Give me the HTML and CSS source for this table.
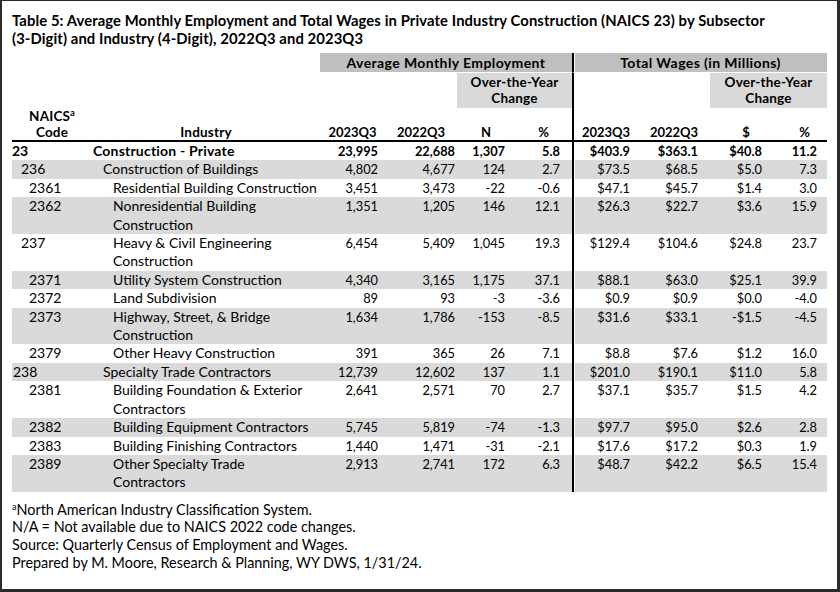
FILE: index.html
```html
<!DOCTYPE html>
<html lang="en">
<head>
<meta charset="utf-8">
<title>Table 5</title>
<link rel="stylesheet" href="styles.css">
</head>
<body>
<div class="page">
  <h1 class="title">Table 5: Average Monthly Employment and Total Wages in Private Industry Construction (NAICS 23) by Subsector<br>(3-Digit) and Industry (4-Digit), 2022Q3 and 2023Q3</h1>
  <table class="data">
    <colgroup>
      <col class="c-code"><col class="c-ind"><col class="c-e23"><col class="c-e22"><col class="c-n"><col class="c-ep"><col class="c-w23"><col class="c-w22"><col class="c-wd"><col class="c-wp">
    </colgroup>
    <thead>
      <tr class="hr1">
        <td colspan="2"></td>
        <th colspan="4" class="band-dark">Average Monthly Employment</th>
        <th colspan="4" class="band-dark wstart">Total Wages (in Millions)</th>
      </tr>
      <tr class="hr2">
        <td colspan="2"></td>
        <td colspan="2"></td>
        <th colspan="2" class="band-light">Over-the-Year<br>Change</th>
        <td colspan="2" class="wstart"></td>
        <th colspan="2" class="band-light">Over-the-Year<br>Change</th>
      </tr>
      <tr class="hr3">
        <th class="lbl">NAICS<sup>a</sup><br>Code</th>
        <th class="lbl">Industry</th>
        <th>2023Q3</th>
        <th>2022Q3</th>
        <th>N</th>
        <th>%</th>
        <th class="wstart">2023Q3</th>
        <th>2022Q3</th>
        <th>$</th>
        <th>%</th>
      </tr>
    </thead>
    <tbody>
      <tr class="total"><td class="code l0">23</td><td class="ind l0">Construction - Private</td><td>23,995</td><td>22,688</td><td>1,307</td><td>5.8</td><td class="wstart">$403.9</td><td>$363.1</td><td>$40.8</td><td>11.2</td></tr>
      <tr class="alt"><td class="code l1">236</td><td class="ind l1">Construction of Buildings</td><td>4,802</td><td>4,677</td><td>124</td><td>2.7</td><td class="wstart">$73.5</td><td>$68.5</td><td>$5.0</td><td>7.3</td></tr>
      <tr><td class="code l2">2361</td><td class="ind l2">Residential Building Construction</td><td>3,451</td><td>3,473</td><td>-22</td><td>-0.6</td><td class="wstart">$47.1</td><td>$45.7</td><td>$1.4</td><td>3.0</td></tr>
      <tr class="alt"><td class="code l2">2362</td><td class="ind l2">Nonresidential Building<br>Construction</td><td>1,351</td><td>1,205</td><td>146</td><td>12.1</td><td class="wstart">$26.3</td><td>$22.7</td><td>$3.6</td><td>15.9</td></tr>
      <tr><td class="code l1">237</td><td class="ind l2">Heavy &amp; Civil Engineering<br>Construction</td><td>6,454</td><td>5,409</td><td>1,045</td><td>19.3</td><td class="wstart">$129.4</td><td>$104.6</td><td>$24.8</td><td>23.7</td></tr>
      <tr class="alt"><td class="code l2">2371</td><td class="ind l2">Utility System Construction</td><td>4,340</td><td>3,165</td><td>1,175</td><td>37.1</td><td class="wstart">$88.1</td><td>$63.0</td><td>$25.1</td><td>39.9</td></tr>
      <tr><td class="code l2">2372</td><td class="ind l2">Land Subdivision</td><td>89</td><td>93</td><td>-3</td><td>-3.6</td><td class="wstart">$0.9</td><td>$0.9</td><td>$0.0</td><td>-4.0</td></tr>
      <tr class="alt"><td class="code l2">2373</td><td class="ind l2">Highway, Street, &amp; Bridge<br>Construction</td><td>1,634</td><td>1,786</td><td>-153</td><td>-8.5</td><td class="wstart">$31.6</td><td>$33.1</td><td>-$1.5</td><td>-4.5</td></tr>
      <tr><td class="code l2">2379</td><td class="ind l2">Other Heavy Construction</td><td>391</td><td>365</td><td>26</td><td>7.1</td><td class="wstart">$8.8</td><td>$7.6</td><td>$1.2</td><td>16.0</td></tr>
      <tr class="alt"><td class="code l1s">238</td><td class="ind l1">Specialty Trade Contractors</td><td>12,739</td><td>12,602</td><td>137</td><td>1.1</td><td class="wstart">$201.0</td><td>$190.1</td><td>$11.0</td><td>5.8</td></tr>
      <tr><td class="code l2">2381</td><td class="ind l2">Building Foundation &amp; Exterior<br>Contractors</td><td>2,641</td><td>2,571</td><td>70</td><td>2.7</td><td class="wstart">$37.1</td><td>$35.7</td><td>$1.5</td><td>4.2</td></tr>
      <tr class="alt"><td class="code l2">2382</td><td class="ind l2">Building Equipment Contractors</td><td>5,745</td><td>5,819</td><td>-74</td><td>-1.3</td><td class="wstart">$97.7</td><td>$95.0</td><td>$2.6</td><td>2.8</td></tr>
      <tr><td class="code l2">2383</td><td class="ind l2">Building Finishing Contractors</td><td>1,440</td><td>1,471</td><td>-31</td><td>-2.1</td><td class="wstart">$17.6</td><td>$17.2</td><td>$0.3</td><td>1.9</td></tr>
      <tr class="alt"><td class="code l2">2389</td><td class="ind l2">Other Specialty Trade<br>Contractors</td><td>2,913</td><td>2,741</td><td>172</td><td>6.3</td><td class="wstart">$48.7</td><td>$42.2</td><td>$6.5</td><td>15.4</td></tr>
    </tbody>
  </table>
  <div class="notes">
    <p><sup>a</sup>North American Industry Classification System.</p>
    <p>N/A = Not available due to NAICS 2022 code changes.</p>
    <p>Source: Quarterly Census of Employment and Wages.</p>
    <p>Prepared by M. Moore, Research &amp; Planning, WY DWS, 1/31/24.</p>
  </div>
</div>
</body>
</html>
```

FILE: styles.css
```css
body {
  margin: 0;
  background: #fff;
}

.page {
  width: 840px;
  height: 592px;
  box-sizing: border-box;
  border-style: solid;
  border-color: #2a2a2a;
  border-width: 1px 3px 3px 2px;
  padding: 11px 10px 0 10px;
  font-family: Lato, "Liberation Sans", sans-serif;
  color: #000;
  background: #fff;
  overflow: hidden;
}

.title {
  margin: 0;
  font-size: 14.8px;
  line-height: 17.8px;
  letter-spacing: 0.1px;
  font-weight: 700;
  white-space: nowrap;
}

.data {
  margin-top: 5px;
  width: 815px;
  table-layout: fixed;
  border-collapse: separate;
  border-spacing: 0;
  font-size: 12.8px;
  font-variant-numeric: tabular-nums lining-nums;
  white-space: nowrap;
}

.data th,
.data td {
  padding: 0;
}

.c-code { width: 80px; }
.c-ind { width: 228px; }
.c-e23 { width: 65px; }
.c-e22 { width: 72px; }
.c-n { width: 58px; }
.c-ep { width: 57px; }
.c-w23 { width: 66px; }
.c-w22 { width: 72px; }
.c-wd { width: 72px; }
.c-wp { width: 45px; }

.wstart {
  border-left: 2px solid #000;
}

/* header bands */
.hr1 th,
.hr1 td {
  height: 19px;
  line-height: 19px;
  border-bottom: 1px solid #fff;
  font-size: 14px;
  font-weight: 700;
  letter-spacing: 0.4px;
  text-align: center;
}

.band-dark {
  background: #bfbfbf;
}

.hr1 .wstart {
  box-shadow: inset 1px 0 0 #fff;
}

.hr2 th,
.hr2 td {
  height: 34px;
  padding-top: 1px;
  line-height: 16.2px;
  vertical-align: top;
  font-size: 13.5px;
  font-weight: 700;
  letter-spacing: 0.2px;
  text-align: center;
}

.band-light {
  background: #d9d9d9;
}

.hr3 th {
  height: 31px;
  line-height: 16.2px;
  vertical-align: bottom;
  font-size: 13px;
  font-weight: 700;
  text-align: center;
  border-bottom: 2px solid #000;
}

.hr3 th.lbl {
  font-size: 13.5px;
  letter-spacing: 0.2px;
}

.hr3 th.wstart {
  border-left: 2px solid #000;
}

sup {
  font-size: 9px;
  line-height: 0;
  vertical-align: 5px;
}

/* body rows */
.data tbody td {
  line-height: 18.4px;
  vertical-align: top;
  text-align: right;
}

.data tbody tr.alt td {
  background: #dadada;
}

.data tbody td.wstart {
  box-shadow: inset 1px 0 0 #fff;
}

.data tbody tr.total td {
  font-weight: 700;
}

.data tbody td.code,
.data tbody td.ind {
  text-align: left;
  font-size: 14px;
}

.data tbody tr.total td.ind {
  letter-spacing: 0.2px;
}

.code.l0 { padding-left: 0; }
.code.l1 { padding-left: 9px; }
.code.l1s { padding-left: 1px; }
.code.l2 { padding-left: 17px; }

.ind.l0 { padding-left: 1px; }
.ind.l1 { padding-left: 11px; }
.ind.l2 { padding-left: 21px; }

.data tbody td:nth-child(3) { padding-right: 7px; }
.data tbody td:nth-child(4) { padding-right: 2px; }
.data tbody td:nth-child(5) { padding-right: 10px; }
.data tbody td:nth-child(6) { padding-right: 12px; }
.data tbody td:nth-child(7) { padding-right: 8px; }
.data tbody td:nth-child(8) { padding-right: 12px; }
.data tbody td:nth-child(9) { padding-right: 20px; }
.data tbody td:nth-child(10) { padding-right: 10px; }

.notes {
  margin-top: 9px;
  font-size: 14.4px;
  line-height: 17.6px;
}

.notes p {
  margin: 0;
  white-space: nowrap;
}

.notes sup {
  vertical-align: 5px;
}
```
